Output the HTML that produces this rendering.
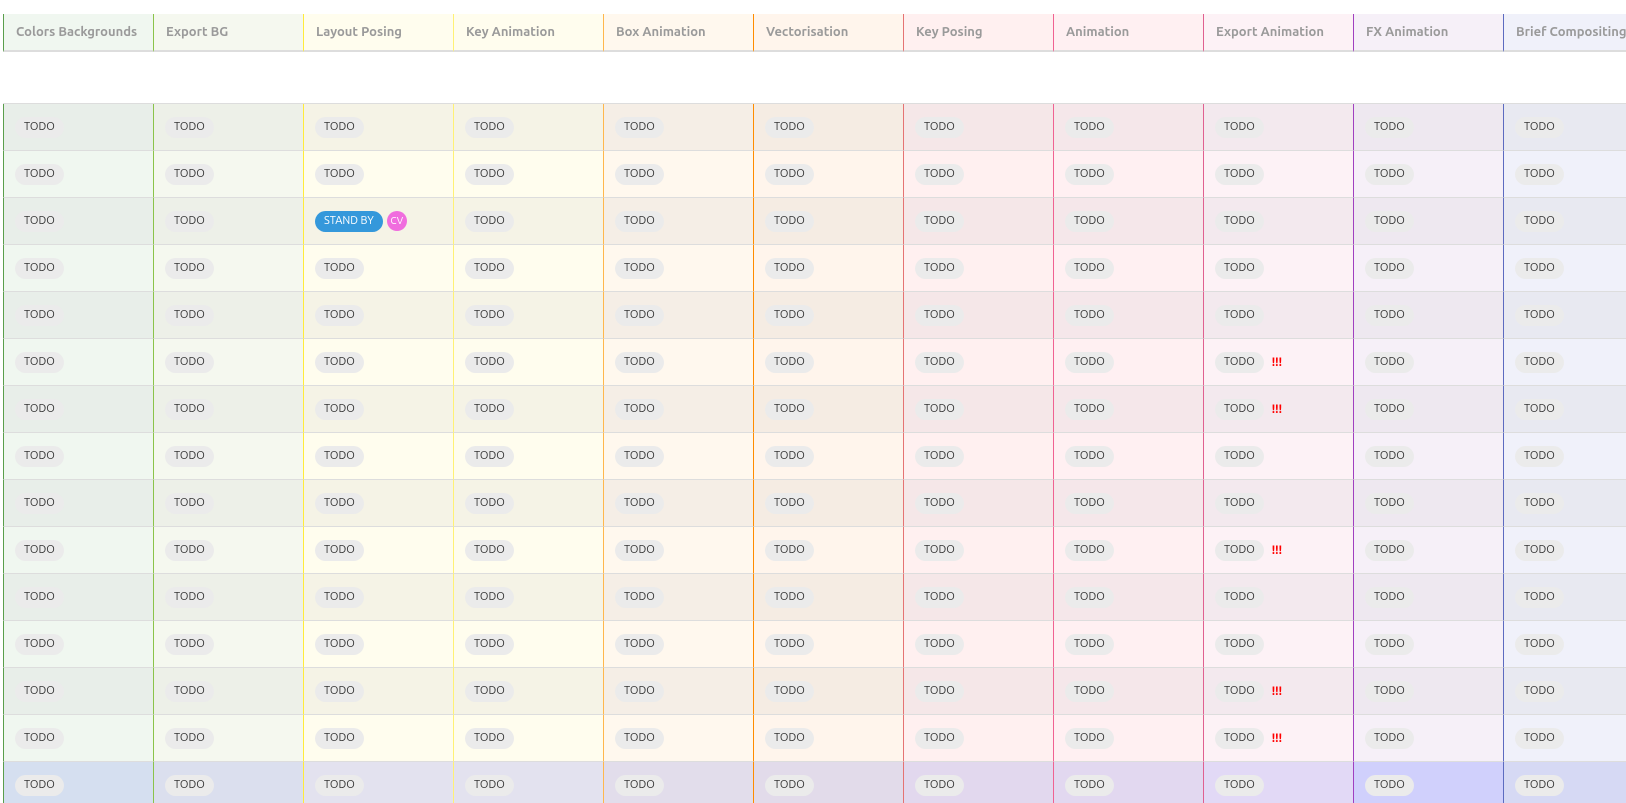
<!DOCTYPE html>
<html><head><meta charset="utf-8"><style>
*{margin:0;padding:0;box-sizing:border-box}
html,body{width:1626px;height:803px;overflow:hidden}
body{background:#fff;font-family:"Ubuntu","Liberation Sans",sans-serif;position:relative}
.col{position:absolute;top:14px;width:150px;height:790px}
.h{height:38px;border-bottom:2px solid #ddd;padding:11px 0 0 12px;font-size:13px;font-weight:bold;color:#9a9a9a;white-space:nowrap;border-left:1px solid}
.gap{height:52px;background:#fff;border-bottom:1px solid #ddd}
.r{height:47px;border-left:1px solid;border-bottom:1px solid #ddd;display:flex;align-items:center;padding:0 0 0 11px}
.p{display:inline-block;height:21px;line-height:21px;border-radius:11px;background:#ebebeb;color:#333;font-size:11px;padding:0 9px;}
.sb{background:#3498db;color:#fff;padding:0 9px}
.cv{display:inline-block;width:20px;height:20px;border-radius:50%;background:#f06dde;color:#fff;font-size:10px;line-height:20px;text-align:center;margin-left:4px}
.ex{color:#f00;font-weight:bold;font-size:12px;margin-left:8px}
</style></head><body>
<div id="g"></div>
<script>
var cols=[
["Colors Backgrounds","#5a9e4b","#f0f7f0","#e8eee9","#d5dff0"],
["Export BG","#8bc34a","#f5f8ef","#edf0e8","#dbdfee"],
["Layout Posing","#ffeb3b","#fffdee","#f5f3e6","#e3e2ef"],
["Key Animation","#fff176","#fffdee","#f5f3e6","#e3e2ef"],
["Box Animation","#ffb74d","#fff8ee","#f5eee6","#e2ddeb"],
["Vectorisation","#ff8c00","#fff5ec","#f5ece3","#e2dbea"],
["Key Posing","#e57373","#fff0f0","#f5e7e8","#e2d8ee"],
["Animation","#f06292","#fff0f2","#f5e7ea","#e2d8f0"],
["Export Animation","#e06090","#fdf2f6","#f3e9ee","#e2d9f6"],
["FX Animation","#a040c0","#f6f0f8","#eee8f0","#d0d0fc"],
["Brief Compositing","#5c6bc0","#f0f1fa","#e8e9f1","#d6d9f4"]];
var ex=[5,6,9,12,13];
var h="";
cols.forEach(function(c,i){
h+='<div class="col" style="left:'+(3+i*150)+'px"><div class="h" style="border-left-color:'+c[1]+';background:'+c[2]+'">'+c[0]+'</div><div class="gap"></div>';
for(var r=0;r<15;r++){
var bg=r==14?c[4]:(r%2==0?c[3]:c[2]);
var inner='<span class="p">TODO</span>';
if(i==2&&r==2)inner='<span class="p sb">STAND BY</span><span class="cv">CV</span>';
if(i==8&&ex.indexOf(r)>=0)inner+='<span class="ex">!!!</span>';
h+='<div class="r" style="border-left-color:'+c[1]+';background:'+bg+'">'+inner+'</div>';
}
h+='</div>';
});
document.getElementById("g").innerHTML=h;
</script>
</body></html>
